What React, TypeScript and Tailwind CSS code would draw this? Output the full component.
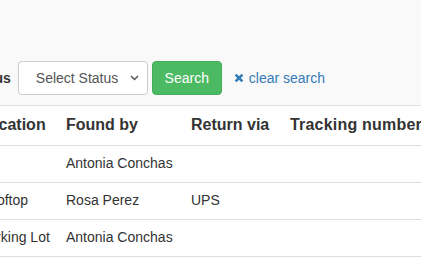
import React from 'react';

interface Row {
  location: string;
  foundBy: string;
  returnVia: string;
  tracking: string;
}

const rows: Row[] = [
  { location: '', foundBy: 'Antonia Conchas', returnVia: '', tracking: '' },
  { location: 'Rooftop', foundBy: 'Rosa Perez', returnVia: 'UPS', tracking: '' },
  { location: 'Parking Lot', foundBy: 'Antonia Conchas', returnVia: '', tracking: '' },
];

const RemoveIcon = () => (
  <svg width="10" height="10" viewBox="0 0 10 10" className="shrink-0">
    <path d="M1.6 1.6 L8.4 8.4 M8.4 1.6 L1.6 8.4" stroke="#337ab7" strokeWidth="2.6" strokeLinecap="butt" />
  </svg>
);

export default function App() {
  return (
    <div
      className="w-[421px] h-[264px] overflow-hidden bg-white text-[14px] text-[#333]"
      style={{ fontFamily: '"Liberation Sans", Arial, sans-serif' }}
    >
      {/* filter panel */}
      <div className="h-[106px] bg-[#f9f9f9] border-b border-[#ddd] pt-[61px]">
        <div className="flex items-center h-[34px] -ml-[32px]">
          <span className="font-bold whitespace-nowrap">Status</span>
          <div className="ml-[7px] w-[130px] h-[34px] bg-white border border-[#ccc] rounded-[4px] flex items-center pl-[17px] pr-[8px] text-[#555]">
            <span className="flex-1">Select Status</span>
            <svg width="9" height="6" viewBox="0 0 9 6">
              <path d="M1 1 L4.5 4.5 L8 1" fill="none" stroke="#555" strokeWidth="1.5" />
            </svg>
          </div>
          <button className="ml-[4px] h-[34px] w-[70px] bg-[#4cb963] border border-[#45ad5a] rounded-[4px] text-white">
            Search
          </button>
          <a className="ml-[12px] flex items-center gap-[5px] text-[#337ab7] whitespace-nowrap">
            <RemoveIcon />
            clear search
          </a>
        </div>
      </div>

      {/* table */}
      <div className="-ml-[29px] w-[600px]">
        <table className="table-fixed border-collapse w-full">
          <colgroup>
            <col className="w-[87px]" />
            <col className="w-[125px]" />
            <col className="w-[99px]" />
            <col />
          </colgroup>
          <thead>
            <tr className="h-[39px] border-b border-[#ddd] text-[16px] font-bold text-left">
              <th className="px-2 whitespace-nowrap">Location</th>
              <th className="px-2 whitespace-nowrap">Found by</th>
              <th className="px-2 whitespace-nowrap">Return via</th>
              <th className="px-2 whitespace-nowrap tracking-[0.2px]">Tracking number</th>
            </tr>
          </thead>
          <tbody>
            {rows.map((r, i) => (
              <tr key={i} className="h-[37px] border-b border-[#ddd]">
                <td className="px-2 whitespace-nowrap">{r.location}</td>
                <td className="px-2 whitespace-nowrap">{r.foundBy}</td>
                <td className="px-2 whitespace-nowrap">{r.returnVia}</td>
                <td className="px-2 whitespace-nowrap">{r.tracking}</td>
              </tr>
            ))}
          </tbody>
        </table>
      </div>
    </div>
  );
}
